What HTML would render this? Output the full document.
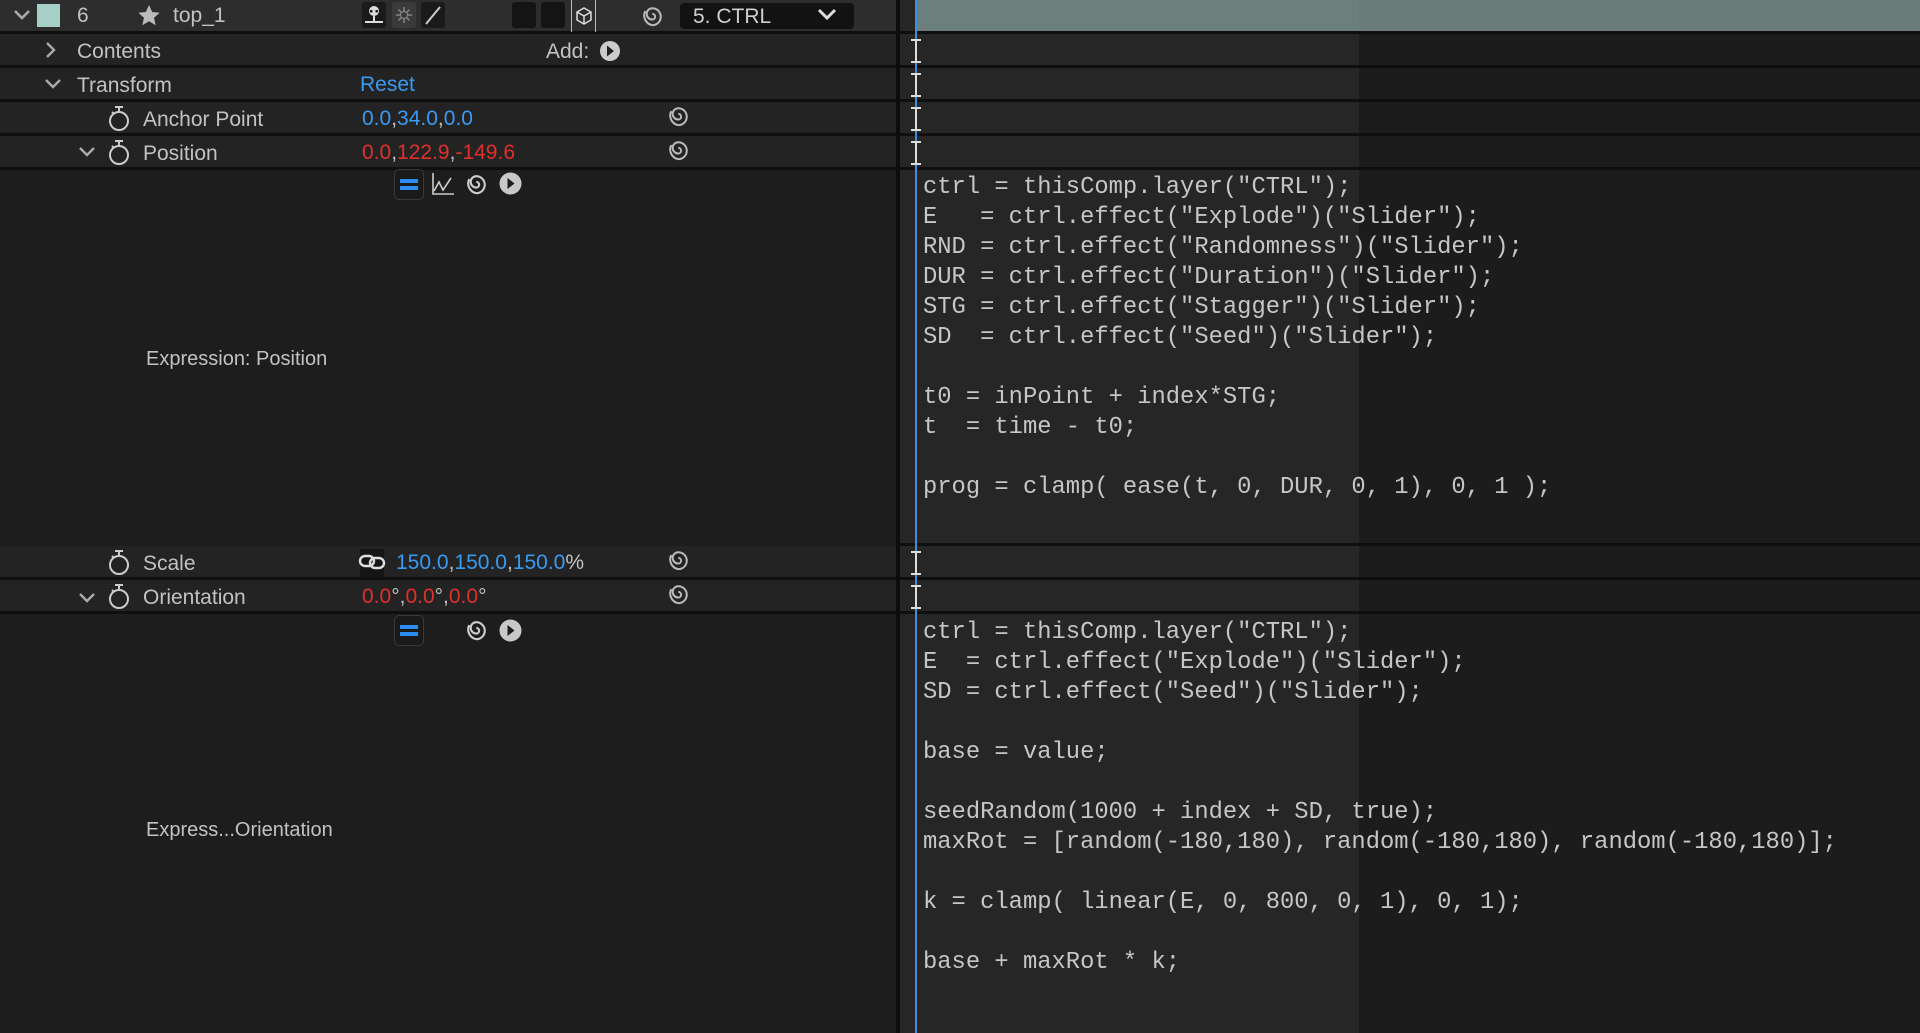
<!DOCTYPE html>
<html><head><meta charset="utf-8"><style>
*{margin:0;padding:0;box-sizing:border-box}
body{width:1920px;height:1033px;background:#1e1e1e;position:relative;overflow:hidden;font-family:"Liberation Sans",sans-serif;font-size:21px;color:#c2c2c2}
.a{position:absolute}
.row{position:absolute;left:0;width:896px;background:#232323;border-bottom:3px solid #0f0f0f}
.t{position:absolute;line-height:1;white-space:nowrap}
.b{color:#3a9af2}.r{color:#e0302c}
.code{position:absolute;left:923px;font-family:"Liberation Mono",monospace;font-size:23.8px;line-height:30px;color:#c6c6c6;white-space:pre}
svg{position:absolute}
</style></head><body>
<div class="a" style="left:0;top:0;width:896px;height:1033px;background:#1d1d1d"></div>
<div class="a" style="left:896px;top:0;width:4px;height:1033px;background:#0c0c0c"></div>
<div class="a" style="left:900px;top:0;width:459px;height:1033px;background:#262626"></div>
<div class="a" style="left:1359px;top:0;width:561px;height:1033px;background:#1c1c1c"></div>
<div class="a" style="left:0;top:0;width:896px;height:31px;background:#2d2d2d"></div>
<div class="a" style="left:0;top:31px;width:1920px;height:3px;background:#0e0e0e"></div>
<div class="a" style="left:916px;top:0;width:1004px;height:31px;background:#6d7f7d"></div>
<div class="a" style="left:1359px;top:0;width:561px;height:31px;background:#6a7b79"></div>
<div class="a" style="left:900px;top:65px;width:1020px;height:3px;background:#0f0f0f"></div>
<div class="a" style="left:900px;top:99px;width:1020px;height:3px;background:#0f0f0f"></div>
<div class="a" style="left:900px;top:133px;width:1020px;height:3px;background:#0f0f0f"></div>
<div class="a" style="left:900px;top:167px;width:1020px;height:3px;background:#0f0f0f"></div>
<div class="a" style="left:900px;top:543px;width:1020px;height:3px;background:#0f0f0f"></div>
<div class="a" style="left:900px;top:577px;width:1020px;height:3px;background:#0f0f0f"></div>
<div class="a" style="left:900px;top:611px;width:1020px;height:3px;background:#0f0f0f"></div>

<div class="row" style="top:34px;height:34px"></div>
<div class="row" style="top:68px;height:34px"></div>
<div class="row" style="top:102px;height:34px"></div>
<div class="row" style="top:136px;height:34px"></div>
<div class="row" style="top:546px;height:34px"></div>
<div class="row" style="top:580px;height:34px"></div>

<svg style="left:13px;top:8px" width="18" height="14"><path d="M2 3l7 7 7-7" stroke="#aaa" stroke-width="2.6" fill="none"/></svg>
<div class="a" style="left:37px;top:4px;width:23px;height:23px;background:#a6cfc8"></div>
<div class="t" style="left:77px;top:5px">6</div>
<svg style="left:137px;top:4px" width="24" height="23"><path d="M12 1l3.2 7 7.5.7-5.7 5 1.7 7.5L12 17.3 5.3 21.2 7 13.7 1.3 8.7l7.5-.7z" fill="#bbb"/></svg>
<div class="t" style="left:173px;top:5px">top_1</div>
<div class="a" style="left:362px;top:2px;width:24px;height:26px;background:#1a1a1a;border-radius:3px"></div>
<svg style="left:362px;top:2px" width="24" height="26"><circle cx="12" cy="9" r="5" fill="#ddd"/><rect x="8" y="8" width="2.5" height="2.5" fill="#222"/><rect x="13.5" y="8" width="2.5" height="2.5" fill="#222"/><path d="M12 14v5M3 20h18" stroke="#ddd" stroke-width="2"/></svg>
<div class="a" style="left:392px;top:2px;width:24px;height:26px;background:#3a3a3a;border-radius:3px"></div>
<svg style="left:392px;top:2px" width="24" height="26"><g stroke="#888" stroke-width="1.5"><path d="M12 5v16M4 13h16M6.5 7.5l11 11M17.5 7.5l-11 11"/></g><circle cx="12" cy="13" r="3.5" fill="#3a3a3a" stroke="#888"/></svg>
<div class="a" style="left:421px;top:2px;width:24px;height:26px;background:#1a1a1a;border-radius:3px"></div>
<svg style="left:421px;top:2px" width="24" height="26"><path d="M5 22L19 5" stroke="#ccc" stroke-width="2"/></svg>
<div class="a" style="left:512px;top:2px;width:24px;height:26px;background:#141414;border-radius:3px"></div>
<div class="a" style="left:541px;top:2px;width:24px;height:26px;background:#141414;border-radius:3px"></div>
<div class="a" style="left:571px;top:0;width:25px;height:32px;border-left:1px solid #bbb;border-right:1px solid #bbb"></div>
<svg style="left:573px;top:5px" width="22" height="22"><path d="M11 3l7 4v8l-7 4-7-4V7zM4 7l7 4 7-4M11 11v8" stroke="#ddd" stroke-width="1.5" fill="none"/></svg>
<svg style="left:641px;top:4px" width="24" height="24" viewBox="4 4 17 17"><path d="M12 11A2 2 0 0 1 12 15A4 4 0 0 1 12 7A6 6 0 0 1 12 19A7 7 0 0 1 7 9" stroke="#bbb" stroke-width="1.4" fill="none"/></svg>
<div class="a" style="left:680px;top:3px;width:174px;height:26px;background:#121212;border-radius:4px"></div>
<div class="t" style="left:693px;top:6px;color:#d0d0d0">5. CTRL</div>
<svg style="left:817px;top:8px" width="20" height="14"><path d="M2 2l8 8 8-8" stroke="#ddd" stroke-width="3" fill="none"/></svg>

<svg style="left:45px;top:41px" width="12" height="18"><path d="M2 2l7 7-7 7" stroke="#aaa" stroke-width="2.4" fill="none"/></svg>
<div class="t" style="left:77px;top:41px">Contents</div>
<div class="t" style="left:546px;top:41px">Add:</div>
<svg style="left:599px;top:40px" width="22" height="22"><circle cx="11" cy="11" r="10" fill="#ccc"/><path d="M8 5.5l7 5.5-7 5.5z" fill="#222"/></svg>
<svg style="left:44px;top:78px" width="18" height="12"><path d="M2 2l7 7 7-7" stroke="#aaa" stroke-width="2.4" fill="none"/></svg>
<div class="t" style="left:77px;top:75px">Transform</div>
<div class="t b" style="left:360px;top:74px">Reset</div>
<svg style="left:107px;top:105px" width="24" height="28"><path d="M8 2h8M12 2v4" stroke="#ccc" stroke-width="2"/><circle cx="12" cy="16" r="9" stroke="#ccc" stroke-width="2" fill="none"/><path d="M5 7l2 2" stroke="#ccc" stroke-width="2"/></svg>
<div class="t" style="left:143px;top:109px">Anchor Point</div>
<div class="t b" style="left:362px;top:108px">0.0<span style="color:#c2c2c2">,</span>34.0<span style="color:#c2c2c2">,</span>0.0</div>
<svg style="left:667px;top:104px" width="24" height="24" viewBox="4 4 17 17"><path d="M12 11A2 2 0 0 1 12 15A4 4 0 0 1 12 7A6 6 0 0 1 12 19A7 7 0 0 1 7 9" stroke="#bbb" stroke-width="1.4" fill="none"/></svg>
<svg style="left:78px;top:146px" width="18" height="12"><path d="M2 2l7 7 7-7" stroke="#aaa" stroke-width="2.4" fill="none"/></svg>
<svg style="left:107px;top:139px" width="24" height="28"><path d="M8 2h8M12 2v4" stroke="#ccc" stroke-width="2"/><circle cx="12" cy="16" r="9" stroke="#ccc" stroke-width="2" fill="none"/><path d="M5 7l2 2" stroke="#ccc" stroke-width="2"/></svg>
<div class="t" style="left:143px;top:143px">Position</div>
<div class="t r" style="left:362px;top:142px">0.0<span style="color:#c2c2c2">,</span>122.9<span style="color:#c2c2c2">,</span>-149.6</div>
<svg style="left:667px;top:138px" width="24" height="24" viewBox="4 4 17 17"><path d="M12 11A2 2 0 0 1 12 15A4 4 0 0 1 12 7A6 6 0 0 1 12 19A7 7 0 0 1 7 9" stroke="#bbb" stroke-width="1.4" fill="none"/></svg>
<div class="a" style="left:394px;top:169px;width:30px;height:31px;border:1px solid #3a3a3a;border-radius:5px;background:#1a1a1a"></div>
<div class="a" style="left:400px;top:179px;width:18px;height:4px;background:#2c8cf0"></div>
<div class="a" style="left:400px;top:186px;width:18px;height:4px;background:#2c8cf0"></div>
<svg style="left:431px;top:172px" width="24" height="24"><path d="M2 1v21h21M3 19l5-9 4 8 8-12" stroke="#ccc" stroke-width="1.6" fill="none"/></svg>
<svg style="left:465px;top:172px" width="24" height="24" viewBox="4 4 17 17"><path d="M12 11A2 2 0 0 1 12 15A4 4 0 0 1 12 7A6 6 0 0 1 12 19A7 7 0 0 1 7 9" stroke="#ccc" stroke-width="1.5" fill="none"/></svg>
<svg style="left:499px;top:172px" width="23" height="23"><circle cx="11.5" cy="11.5" r="11" fill="#c8c8c8"/><path d="M8.5 6l7 5.5-7 5.5z" fill="#1d1d1d"/></svg>
<div class="t" style="left:146px;top:349px;font-size:20px">Expression: Position</div>

<svg style="left:107px;top:549px" width="24" height="28"><path d="M8 2h8M12 2v4" stroke="#ccc" stroke-width="2"/><circle cx="12" cy="16" r="9" stroke="#ccc" stroke-width="2" fill="none"/><path d="M5 7l2 2" stroke="#ccc" stroke-width="2"/></svg>
<div class="t" style="left:143px;top:553px">Scale</div>
<div class="a" style="left:360px;top:549px;width:24px;height:28px;background:#151515"></div>
<svg style="left:358px;top:553px" width="28" height="18"><rect x="2" y="3" width="14" height="10" rx="5" stroke="#ddd" stroke-width="2.4" fill="none"/><rect x="12" y="5" width="14" height="10" rx="5" stroke="#ddd" stroke-width="2.4" fill="none"/></svg>
<div class="t b" style="left:396px;top:552px">150.0<span style="color:#c2c2c2">,</span>150.0<span style="color:#c2c2c2">,</span>150.0<span style="color:#c2c2c2">%</span></div>
<svg style="left:667px;top:548px" width="24" height="24" viewBox="4 4 17 17"><path d="M12 11A2 2 0 0 1 12 15A4 4 0 0 1 12 7A6 6 0 0 1 12 19A7 7 0 0 1 7 9" stroke="#bbb" stroke-width="1.4" fill="none"/></svg>
<svg style="left:78px;top:592px" width="18" height="12"><path d="M2 2l7 7 7-7" stroke="#aaa" stroke-width="2.4" fill="none"/></svg>
<svg style="left:107px;top:583px" width="24" height="28"><path d="M8 2h8M12 2v4" stroke="#ccc" stroke-width="2"/><circle cx="12" cy="16" r="9" stroke="#ccc" stroke-width="2" fill="none"/><path d="M5 7l2 2" stroke="#ccc" stroke-width="2"/></svg>
<div class="t" style="left:143px;top:587px">Orientation</div>
<div class="t r" style="left:362px;top:586px">0.0<span style="color:#c2c2c2">°,</span>0.0<span style="color:#c2c2c2">°,</span>0.0<span style="color:#c2c2c2">°</span></div>
<svg style="left:667px;top:582px" width="24" height="24" viewBox="4 4 17 17"><path d="M12 11A2 2 0 0 1 12 15A4 4 0 0 1 12 7A6 6 0 0 1 12 19A7 7 0 0 1 7 9" stroke="#bbb" stroke-width="1.4" fill="none"/></svg>
<div class="a" style="left:394px;top:615px;width:30px;height:31px;border:1px solid #3a3a3a;border-radius:5px;background:#1a1a1a"></div>
<div class="a" style="left:400px;top:625px;width:18px;height:4px;background:#2c8cf0"></div>
<div class="a" style="left:400px;top:632px;width:18px;height:4px;background:#2c8cf0"></div>
<svg style="left:465px;top:618px" width="24" height="24" viewBox="4 4 17 17"><path d="M12 11A2 2 0 0 1 12 15A4 4 0 0 1 12 7A6 6 0 0 1 12 19A7 7 0 0 1 7 9" stroke="#ccc" stroke-width="1.5" fill="none"/></svg>
<svg style="left:499px;top:619px" width="23" height="23"><circle cx="11.5" cy="11.5" r="11" fill="#c8c8c8"/><path d="M8.5 6l7 5.5-7 5.5z" fill="#1d1d1d"/></svg>
<div class="t" style="left:146px;top:820px;font-size:20px">Express...Orientation</div>

<div class="a" style="left:915px;top:0;width:2px;height:1033px;background:#3e8ee0"></div>
<svg style="left:909px;top:38px" width="14" height="26"><path d="M2 2h10M7 2v22M2 24h10" stroke="#ddd" stroke-width="2"/></svg>
<svg style="left:909px;top:72px" width="14" height="26"><path d="M2 2h10M7 2v22M2 24h10" stroke="#ddd" stroke-width="2"/></svg>
<svg style="left:909px;top:106px" width="14" height="26"><path d="M2 2h10M7 2v22M2 24h10" stroke="#ddd" stroke-width="2"/></svg>
<svg style="left:909px;top:140px" width="14" height="26"><path d="M2 2h10M7 2v22M2 24h10" stroke="#ddd" stroke-width="2"/></svg>
<svg style="left:909px;top:550px" width="14" height="26"><path d="M2 2h10M7 2v22M2 24h10" stroke="#ddd" stroke-width="2"/></svg>
<svg style="left:909px;top:584px" width="14" height="26"><path d="M2 2h10M7 2v22M2 24h10" stroke="#ddd" stroke-width="2"/></svg>

<div class="code" style="top:173px">ctrl = thisComp.layer("CTRL");
E   = ctrl.effect("Explode")("Slider");
RND = ctrl.effect("Randomness")("Slider");
DUR = ctrl.effect("Duration")("Slider");
STG = ctrl.effect("Stagger")("Slider");
SD  = ctrl.effect("Seed")("Slider");

t0 = inPoint + index*STG;
t  = time - t0;

prog = clamp( ease(t, 0, DUR, 0, 1), 0, 1 );</div>
<div class="code" style="top:618px">ctrl = thisComp.layer("CTRL");
E  = ctrl.effect("Explode")("Slider");
SD = ctrl.effect("Seed")("Slider");

base = value;

seedRandom(1000 + index + SD, true);
maxRot = [random(-180,180), random(-180,180), random(-180,180)];

k = clamp( linear(E, 0, 800, 0, 1), 0, 1);

base + maxRot * k;</div>
</body></html>
